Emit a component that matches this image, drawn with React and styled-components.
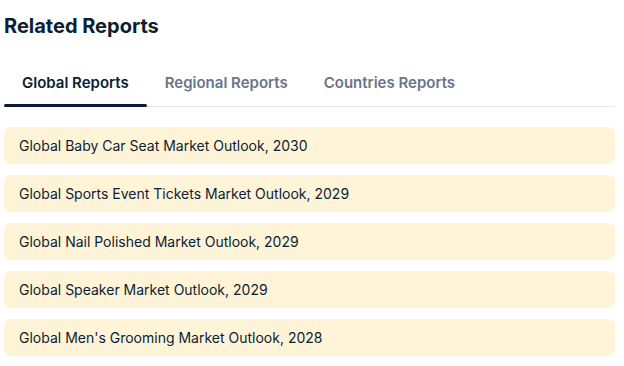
import styled, { createGlobalStyle } from "styled-components";

const GlobalStyle = createGlobalStyle`
  body {
    margin: 0;
    background: #ffffff;
    font-family: Inter, "Noto Sans", sans-serif;
  }
`;

const Wrapper = styled.div`
  padding: 12px 9px 0 4px;
`;

const Title = styled.h2`
  margin: 0;
  font-size: 20px;
  line-height: 28px;
  font-weight: 700;
  color: #0b1e33;
`;

const Tabs = styled.div`
  display: flex;
  margin-top: 21px;
  border-bottom: 1px solid #e5e7eb;
`;

const Tab = styled.div`
  position: relative;
  padding: 0 18px 4px;
  height: 46px;
  box-sizing: border-box;
  display: flex;
  align-items: center;
  font-size: 15px;
  font-weight: 600;
  color: ${(props) => (props.active ? "#0b1e33" : "#6b7587")};
  margin-bottom: -1px;

  &::after {
    content: "";
    display: ${(props) => (props.active ? "block" : "none")};
    position: absolute;
    left: 0;
    right: 0;
    bottom: 0;
    height: 3px;
    border-radius: 2px;
    background: #0b1e33;
  }
`;

const List = styled.div`
  display: flex;
  flex-direction: column;
  gap: 11px;
  margin-top: 20px;
`;

const Card = styled.div`
  height: 37px;
  display: flex;
  align-items: center;
  padding: 0 15px;
  background: #fff4d7;
  border-radius: 6px;
  font-size: 14px;
  color: #0b1e33;
`;

const tabs = ["Global Reports", "Regional Reports", "Countries Reports"];

const reports = [
  "Global Baby Car Seat Market Outlook, 2030",
  "Global Sports Event Tickets Market Outlook, 2029",
  "Global Nail Polished Market Outlook, 2029",
  "Global Speaker Market Outlook, 2029",
  "Global Men's Grooming Market Outlook, 2028",
];

const App = () => {
  return (
    <Wrapper>
      <GlobalStyle />
      <Title>Related Reports</Title>
      <Tabs>
        {tabs.map((t, i) => (
          <Tab key={t} active={i === 0}>
            {t}
          </Tab>
        ))}
      </Tabs>
      <List>
        {reports.map((r) => (
          <Card key={r}>{r}</Card>
        ))}
      </List>
    </Wrapper>
  );
};

export default App;
